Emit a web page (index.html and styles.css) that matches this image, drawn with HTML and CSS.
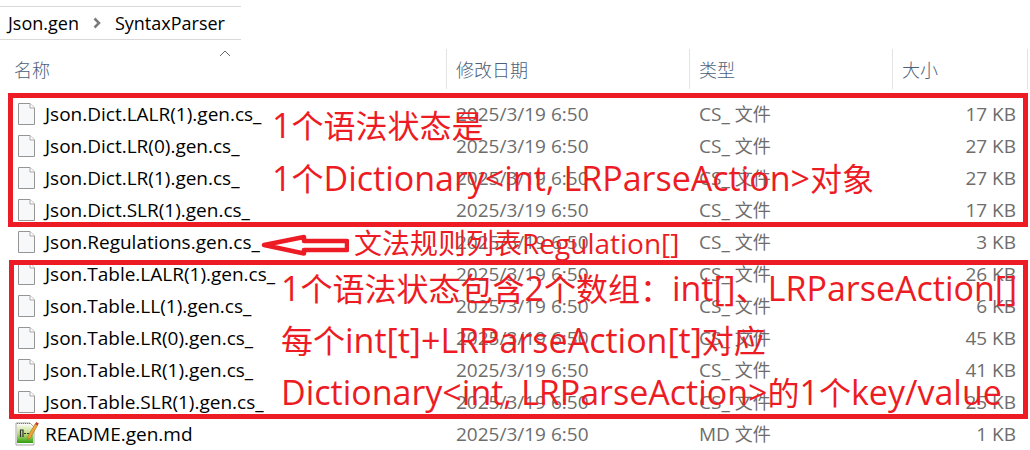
FILE: index.html
```html
<!DOCTYPE html>
<html lang="zh-CN">
<head>
  <meta charset="UTF-8">
  <meta name="viewport" content="width=device-width, initial-scale=1.0">
  <title>SyntaxParser</title>
  <link rel="stylesheet" href="styles.css">
</head>
<body>

  <svg class="symbols" width="0" height="0" aria-hidden="true">
    <symbol id="file-icon" viewBox="0 0 17 22">
      <path d="M.5.5h11.5l4.500 4.500v16.500h-16z" fill="#f7f8f9" stroke="#959595"/>
      <path d="M12 .5v4.500h4.500" fill="#fff" stroke="#a8a8a8"/>
    </symbol>
  </svg>

  <nav class="breadcrumb" aria-label="路径">
    <a href="#">Json.gen</a>
    <svg class="chevron" width="8" height="12" viewBox="0 0 8 12"><path d="M1.500 1.500L6 6l-4.500 4.500" fill="none" stroke="#7a7a7a" stroke-width="2.500"/></svg>
    <a href="#">SyntaxParser</a>
  </nav>

  <main class="listing">
    <table class="files">
      <thead>
        <tr>
          <th class="name">名称
            <svg class="sort" width="12" height="7" viewBox="0 0 12 7"><path d="M1 6l5-5 5 5" fill="none" stroke="#6d6d6d"/></svg>
          </th>
          <th class="date">修改日期</th>
          <th class="type">类型</th>
          <th class="size">大小</th>
        </tr>
      </thead>
      <tbody>
        <tr><td><span class="file"><svg class="icon"><use href="#file-icon"/></svg>Json.Dict.LALR(1).gen.cs_</span></td><td>2025/3/19 6:50</td><td>CS_ <span class="zh">文件</span></td><td>17 KB</td></tr>
        <tr><td><span class="file"><svg class="icon"><use href="#file-icon"/></svg>Json.Dict.LR(0).gen.cs_</span></td><td>2025/3/19 6:50</td><td>CS_ <span class="zh">文件</span></td><td>27 KB</td></tr>
        <tr><td><span class="file"><svg class="icon"><use href="#file-icon"/></svg>Json.Dict.LR(1).gen.cs_</span></td><td>2025/3/19 6:50</td><td>CS_ <span class="zh">文件</span></td><td>27 KB</td></tr>
        <tr><td><span class="file"><svg class="icon"><use href="#file-icon"/></svg>Json.Dict.SLR(1).gen.cs_</span></td><td>2025/3/19 6:50</td><td>CS_ <span class="zh">文件</span></td><td>17 KB</td></tr>
        <tr><td><span class="file"><svg class="icon"><use href="#file-icon"/></svg>Json.Regulations.gen.cs_</span></td><td>2025/3/19 6:50</td><td>CS_ <span class="zh">文件</span></td><td>3 KB</td></tr>
        <tr><td><span class="file"><svg class="icon"><use href="#file-icon"/></svg>Json.Table.LALR(1).gen.cs_</span></td><td>2025/3/19 6:50</td><td>CS_ <span class="zh">文件</span></td><td>26 KB</td></tr>
        <tr><td><span class="file"><svg class="icon"><use href="#file-icon"/></svg>Json.Table.LL(1).gen.cs_</span></td><td>2025/3/19 6:50</td><td>CS_ <span class="zh">文件</span></td><td>6 KB</td></tr>
        <tr><td><span class="file"><svg class="icon"><use href="#file-icon"/></svg>Json.Table.LR(0).gen.cs_</span></td><td>2025/3/19 6:50</td><td>CS_ <span class="zh">文件</span></td><td>45 KB</td></tr>
        <tr><td><span class="file"><svg class="icon"><use href="#file-icon"/></svg>Json.Table.LR(1).gen.cs_</span></td><td>2025/3/19 6:50</td><td>CS_ <span class="zh">文件</span></td><td>41 KB</td></tr>
        <tr><td><span class="file"><svg class="icon"><use href="#file-icon"/></svg>Json.Table.SLR(1).gen.cs_</span></td><td>2025/3/19 6:50</td><td>CS_ <span class="zh">文件</span></td><td>25 KB</td></tr>
        <tr>
          <td><span class="file">
            <svg class="icon readme" viewBox="0 0 24 24">
              <defs><linearGradient id="green" x1="0" y1="0" x2="0" y2="1"><stop offset="0" stop-color="#f4f8e8"/><stop offset=".5" stop-color="#b9dc7a"/><stop offset="1" stop-color="#2f9e0c"/></linearGradient></defs>
              <path d="M1 1h14l4 4v18H1z" fill="#fafafa" stroke="#a5a9a5"/>
              <path d="M2 3h13l3 4v14H2z" fill="url(#green)"/>
              <path d="M2 1.500h13" stroke="#777" stroke-dasharray="1 1"/>
              <path d="M5.500 15V8h2.500v7M9 11.500h2M12 11.500h2" fill="none" stroke="#333" stroke-width="1.200"/>
              <path d="M12.500 18l.5-4 7-12 2.500 1.500-7 12z" fill="#f0a63a" stroke="#a86a20" stroke-width=".6"/>
              <path d="M20 2l1.300-2 2.500 1.600L22.500 3.600z" fill="#c0392b"/>
            </svg>README.gen.md</span></td>
          <td>2025/3/19 6:50</td><td>MD <span class="zh">文件</span></td><td>1 KB</td>
        </tr>
      </tbody>
    </table>

    <!-- red notes drawn over the list -->
    <section class="note note-dict">
      <p>1<span class="zh">个语法状态是</span></p>
      <p>1<span class="zh">个</span>Dictionary&lt;int, LRParseAction&gt;<span class="zh">对象</span></p>
    </section>

    <section class="note-regulation">
      <svg width="88" height="24" viewBox="0 0 88 24"><path d="M3 13L43 5v4h43v9H43v3.500z" fill="#fff" stroke="#ed1c24" stroke-width="4.500" stroke-linejoin="round"/></svg>
      <p><span class="zh">文法规则列表</span>Regulation[]</p>
    </section>

    <section class="note note-table">
      <p>1<span class="zh">个语法状态包含</span>2<span class="zh">个数组：</span>int[]<span class="zh">、</span>LRParseAction[]</p>
      <p><span class="zh">每个</span>int[t]+LRParseAction[t]<span class="zh">对应</span></p>
      <p>Dictionary&lt;int, LRParseAction&gt;<span class="zh">的</span>1<span class="zh">个</span>key/value</p>
    </section>
  </main>

</body>
</html>
```
FILE: styles.css
```css
* { box-sizing: border-box; }
body { margin: 0; background: #fff; color: #000; font-family: "Open Sans", "Noto Sans CJK SC", sans-serif; font-size: 19px; }
p { margin: 0; }
.symbols { display: block; }
.zh { font-family: "Noto Sans CJK SC", sans-serif; font-size: 18px; line-height: 1; }

.breadcrumb { display: flex; align-items: center; gap: 14px; width: 241px; height: 34px; margin-top: 6px; padding-left: 8px; border-top: 1px solid #d9d9d9; border-bottom: 1px solid #d9d9d9; font-size: 18px; }
.breadcrumb a { color: #000; text-decoration: none; }

.listing { position: relative; margin-right: 2px; padding-top: 9px; }
.files { width: 100%; table-layout: fixed; border-collapse: separate; border-spacing: 0; }
.files th { position: relative; height: 40px; padding: 0 9px; border-right: 1px solid #e3e3e3; color: #4c607a; font-family: "Noto Sans CJK SC", sans-serif; font-size: 18px; font-weight: 300; text-align: left; }
.files th.name { padding-left: 14px; }
.files .date { width: 243px; }
.files .type { width: 203px; }
.files .size { width: 135px; }
.sort { position: absolute; top: 1px; left: 49%; }
.files tbody::before { content: ""; display: block; height: 9px; }
.files td { height: 32px; padding: 0 9px; color: #6d6d6d; line-height: 24px; white-space: nowrap; }
.files td:first-child { padding-left: 14px; color: #000; }
.files td:last-child { padding-right: 12px; text-align: right; }
.file { display: flex; align-items: center; }
.icon { width: 17px; height: 22px; margin: 0 10px 0 4px; }
.icon.readme { width: 24px; height: 24px; margin: 0 6px 0 1px; }

.note { position: absolute; left: 8px; right: 0; border: 5px solid #ed1c24; color: #ed1c24; font-size: 34px; line-height: 52px; white-space: nowrap; }
.note p { height: 53px; }
.note .zh { font-size: 32px; }
.note-dict { top: 53px; height: 134px; padding: 1px 0 0 259px; }
.note-table { top: 220px; left: 9px; height: 159px; padding-left: 267px; line-height: 46px; }
.note-table p { height: 52px; }
.note-regulation { position: absolute; top: 187px; left: 261px; display: flex; align-items: center; gap: 5px; height: 33px; color: #ed1c24; font-size: 28px; line-height: 33px; white-space: nowrap; }
.note-regulation .zh { font-size: 28px; }
```
